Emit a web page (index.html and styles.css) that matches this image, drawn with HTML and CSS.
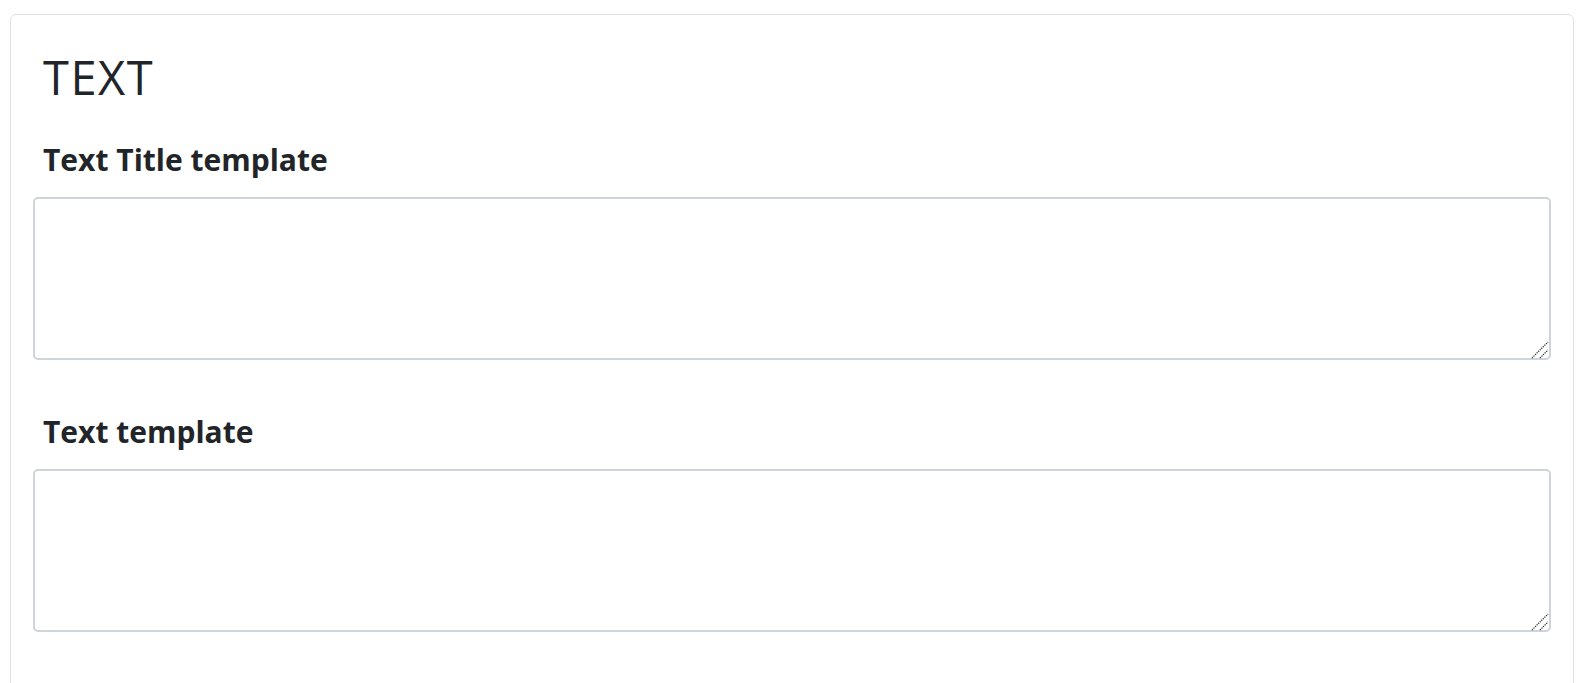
FILE: index.html
```html
<!DOCTYPE html>
<html>
<head>
<meta charset="utf-8">
<link rel="stylesheet" href="styles.css">
</head>
<body>
<div class="page">
  <div class="card">
    <h1 class="card-title">TEXT</h1>
    <div class="field">
      <label class="field-label" for="t1">Text Title template</label>
      <div class="input-wrap">
        <textarea id="t1" class="field-input"></textarea>
        <svg class="grip" width="18" height="18" viewBox="0 0 18 18"><path d="M1 17L17 1M9 17L17 9" stroke="#333" stroke-width="1.3" stroke-dasharray="1.2 1" fill="none"/></svg>
      </div>
    </div>
    <div class="field">
      <label class="field-label" for="t2">Text template</label>
      <div class="input-wrap">
        <textarea id="t2" class="field-input"></textarea>
        <svg class="grip" width="18" height="18" viewBox="0 0 18 18"><path d="M1 17L17 1M9 17L17 9" stroke="#333" stroke-width="1.3" stroke-dasharray="1.2 1" fill="none"/></svg>
      </div>
    </div>
  </div>
</div>
</body>
</html>
```
FILE: styles.css
```css
html, body {
  margin: 0;
  padding: 0;
  background: #fff;
  font-family: "Open Sans", "Noto Sans", sans-serif;
  color: #212529;
}
.page {
  padding: 14px 3px 0 10px;
  height: 683px;
  box-sizing: border-box;
  overflow: hidden;
}
.card {
  border: 1px solid #dee2e6;
  border-radius: 6px;
  padding: 29px 22px 60px 22px;
  min-height: 700px;
}
.card-title {
  margin: 0 0 0 10px;
  font-size: 47px;
  font-weight: 400;
  letter-spacing: 1.5px;
  line-height: 66px;
}
.field {
  display: flex;
  flex-direction: column;
}
.field + .field {
  margin-top: 22px;
}
.field-label {
  margin: 32px 0 19px 10px;
  font-size: 30px;
  font-weight: 700;
  line-height: 36px;
}
.input-wrap {
  position: relative;
}
.field-input {
  display: block;
  width: 100%;
  box-sizing: border-box;
  height: 163px;
  border: 2px solid #ced4da;
  border-radius: 5px;
  padding: 8px 12px;
  font-family: inherit;
  font-size: 16px;
  resize: none;
  outline: none;
}
.grip {
  position: absolute;
  right: 2px;
  bottom: 1px;
  pointer-events: none;
}
```
